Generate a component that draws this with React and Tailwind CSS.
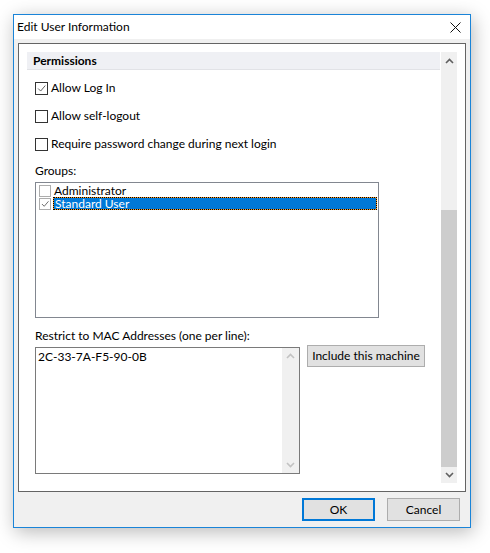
import React from "react";

// ---------------------------------------------------------------------------
// Edit User Information — Win10-style dialog
// ---------------------------------------------------------------------------

const FONT = { fontFamily: 'Lato, "Noto Sans", sans-serif' };

function Check({ className = "" }) {
  return (
    <svg className={className} viewBox="0 0 13 13" fill="none">
      <path d="M2.5 6.5l3 3 5.5-6.5" stroke="#555" strokeWidth="1.1" />
    </svg>
  );
}

function CheckRow({ label, checked = false }) {
  return (
    <div className="flex items-center h-[14px]">
      <span className="w-[13px] h-[13px] border border-[#333] bg-white shrink-0 flex items-center justify-center">
        {checked && <Check className="w-[11px] h-[11px]" />}
      </span>
      <span className="ml-[3px] text-[12px] leading-none text-black">{label}</span>
    </div>
  );
}

function Arrow({ up = true, color = "#606060" }) {
  return (
    <svg className="w-[9px] h-[6px]" viewBox="0 0 9 6">
      <path
        d={up ? "M1 5l3.5-3.5L8 5" : "M1 1l3.5 3.5L8 1"}
        stroke={color}
        strokeWidth="1.6"
        fill="none"
      />
    </svg>
  );
}

export default function App() {
  return (
    <div className="w-[490px] h-[553px] bg-white pt-[14px] pl-[13px]" style={FONT}>
      {/* Window */}
      <div className="w-[458px] h-[514px] border border-[#1a84d8] bg-[#f0f0f0] flex flex-col shadow-[2px_4px_18px_rgba(0,0,0,0.28)]">
        {/* Title bar */}
        <div className="h-[24px] bg-white flex items-center justify-between pl-[3px] pr-[9px]">
          <span className="text-[12px] text-black">Edit User Information</span>
          <svg className="w-[11px] h-[11px]" viewBox="0 0 11 11">
            <path d="M0.5 0.5l10 10M10.5 0.5l-10 10" stroke="#111" strokeWidth="1" />
          </svg>
        </div>

        {/* Client */}
        <div className="flex-1 px-[4px] pt-[4px] flex flex-col">
          {/* Scroll panel */}
          <div className="h-[449px] border border-[#646464] bg-white p-[8px] flex">
            <div className="flex-1 flex flex-col">
              <div className="h-[18px] bg-[#eff0f4] border-b border-[#e1e2e6] flex items-center pl-[6px]">
                <span className="text-[12px] font-bold text-black">Permissions</span>
              </div>

              <div className="pl-[8px] flex flex-col">
                <div className="mt-[11px] flex flex-col gap-[14px]">
                  <CheckRow label="Allow Log In" checked />
                  <CheckRow label="Allow self-logout" />
                  <CheckRow label="Require password change during next login" />
                </div>

                <div className="mt-[13px] text-[12px] leading-[14px]">Groups:</div>

                {/* Group list */}
                <div className="mt-[4px] w-[344px] h-[136px] border border-[#828790] bg-white pt-[1px] pl-[3px] pr-[1px]">
                  <div className="flex items-center h-[13px]">
                    <span className="w-[12px] h-[12px] border border-[#adadad] bg-white shrink-0" />
                    <span className="ml-[3px] text-[12px] leading-none">Administrator</span>
                  </div>
                  <div className="flex items-center h-[13px]">
                    <span className="w-[12px] h-[12px] border border-[#adadad] bg-white shrink-0 flex items-center justify-center">
                      <Check className="w-[10px] h-[10px]" />
                    </span>
                    <span className="ml-[2px] flex-1 h-[13px] bg-[#ff9a1e] border border-dotted border-black">
                      <span className="block h-full bg-[#0078d7] text-white text-[12px] leading-[11px] pl-[1px]">
                        Standard User
                      </span>
                    </span>
                  </div>
                </div>

                <div className="mt-[11px] text-[12px] leading-[14px]">
                  Restrict to MAC Addresses (one per line):
                </div>

                <div className="mt-[2px] flex items-start">
                  <div className="mt-[2px] w-[265px] h-[127px] border border-[#7a7a7a] bg-white flex">
                    <div className="flex-1 pl-[2px] pt-[2px] text-[12px] leading-[14px]">
                      2C-33-7A-F5-90-0B
                    </div>
                    <div className="w-[17px] bg-[#f0f0f0] flex flex-col items-center justify-between py-[5px]">
                      <Arrow up color="#c2c2c2" />
                      <Arrow up={false} color="#c2c2c2" />
                    </div>
                  </div>
                  <button className="ml-[7px] w-[118px] h-[22px] border border-[#adadad] bg-[#e1e1e1] text-[12px] leading-none text-black whitespace-nowrap">
                    Include this machine
                  </button>
                </div>
              </div>
            </div>

            {/* Panel scrollbar */}
            <div className="w-[16px] ml-[1px] bg-[#f0f0f0] flex flex-col">
              <div className="h-[17px] flex items-center justify-center">
                <Arrow up />
              </div>
              <div className="h-[141px]" />
              <div className="flex-1 bg-[#cdcdcd]" />
              <div className="h-[16px] flex items-center justify-center">
                <Arrow up={false} />
              </div>
            </div>
          </div>

          {/* Buttons */}
          <div className="mt-[6px] flex justify-end gap-[12px] pr-[6px]">
            <button className="w-[73px] h-[23px] border-2 border-[#0078d7] bg-[#e1e1e1] text-[12px] leading-none text-black">
              OK
            </button>
            <button className="w-[73px] h-[23px] border border-[#adadad] bg-[#e1e1e1] text-[12px] leading-none text-black">
              Cancel
            </button>
          </div>
        </div>
      </div>
    </div>
  );
}
